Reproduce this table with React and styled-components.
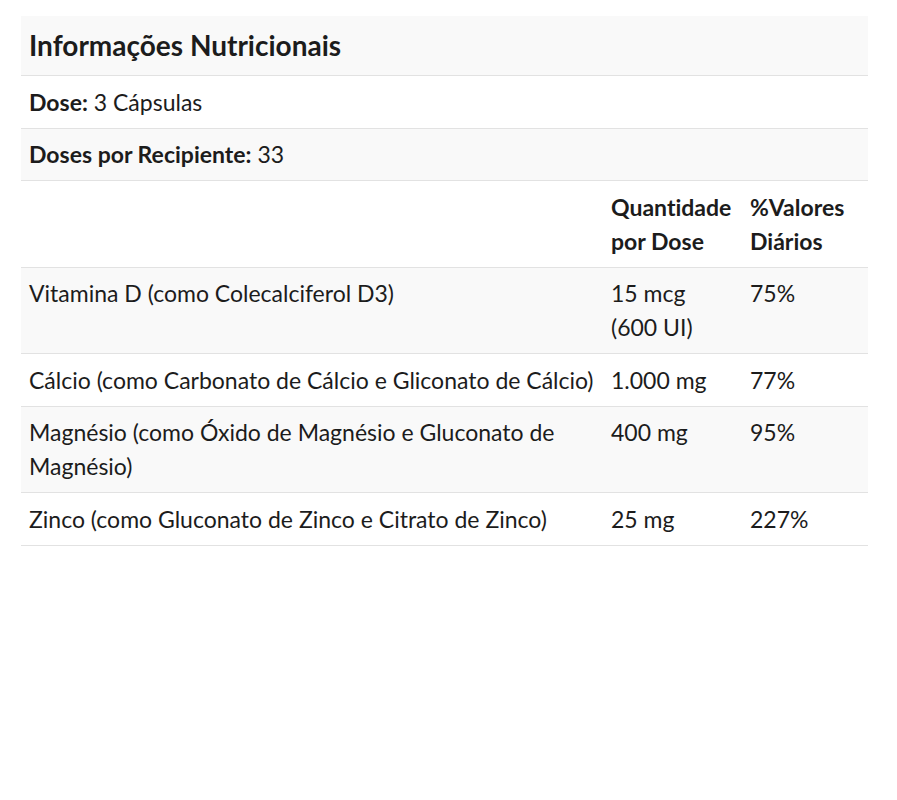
import React from "react";
import styled, { createGlobalStyle } from "styled-components";

const GlobalStyle = createGlobalStyle`
  body {
    margin: 0;
    background: #ffffff;
    font-family: Lato, "Open Sans", sans-serif;
    font-variant-ligatures: none;
    color: #1c1c1c;
  }
`;

const Page = styled.div`
  padding: 16px 29px 0 21px;
`;

const Table = styled.table`
  width: 847px;
  border-collapse: collapse;
  table-layout: fixed;
  font-size: 23px;
  line-height: 34px;
`;

const Row = styled.tr`
  background: ${(p) => (p.$shaded ? "#f9f9f9" : "#ffffff")};
  border-bottom: 1px solid #e2e2e2;
`;

const Cell = styled.td`
  padding: 8.5px 8px 9px;
  vertical-align: top;
  text-align: left;
`;

const HeadCell = styled(Cell).attrs({ as: "th" })`
  font-weight: 700;
`;

const Title = styled.td`
  padding: 9px 8px 9px;
  font-size: 28px;
  line-height: 41px;
  font-weight: 700;
`;

const Label = styled.strong`
  font-weight: 700;
`;

const nutrients = [
  { name: "Vitamina D (como Colecalciferol D3)", amount: ["15 mcg", "(600 UI)"], dv: "75%" },
  { name: "Cálcio (como Carbonato de Cálcio e Gliconato de Cálcio)", amount: ["1.000 mg"], dv: "77%" },
  { name: "Magnésio (como Óxido de Magnésio e Gluconato de Magnésio)", amount: ["400 mg"], dv: "95%" },
  { name: "Zinco (como Gluconato de Zinco e Citrato de Zinco)", amount: ["25 mg"], dv: "227%" },
];

const App = () => {
  return (
    <Page>
      <GlobalStyle />
      <Table>
        <colgroup>
          <col style={{ width: "582px" }} />
          <col style={{ width: "139px" }} />
          <col style={{ width: "126px" }} />
        </colgroup>
        <tbody>
          <Row $shaded>
            <Title colSpan={3}>Informações Nutricionais</Title>
          </Row>
          <Row>
            <Cell colSpan={3}>
              <Label>Dose:</Label> 3 Cápsulas
            </Cell>
          </Row>
          <Row $shaded>
            <Cell colSpan={3}>
              <Label>Doses por Recipiente:</Label> 33
            </Cell>
          </Row>
          <Row>
            <HeadCell></HeadCell>
            <HeadCell>
              Quantidade
              <br />
              por Dose
            </HeadCell>
            <HeadCell>
              %Valores
              <br />
              Diários
            </HeadCell>
          </Row>
          {nutrients.map((item, i) => (
            <Row key={item.name} $shaded={i % 2 === 0}>
              <Cell>{item.name}</Cell>
              <Cell>
                {item.amount.map((line, j) => (
                  <React.Fragment key={line}>
                    {j > 0 && <br />}
                    {line}
                  </React.Fragment>
                ))}
              </Cell>
              <Cell>{item.dv}</Cell>
            </Row>
          ))}
        </tbody>
      </Table>
    </Page>
  );
};

export default App;
